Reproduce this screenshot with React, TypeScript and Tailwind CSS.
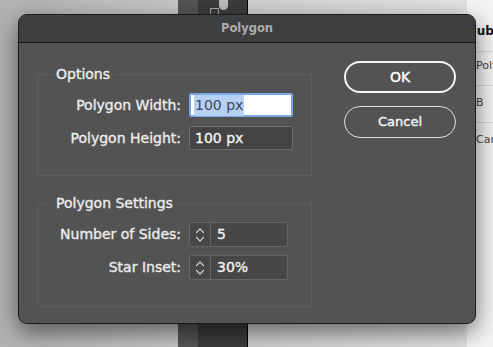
import React from "react";

const font = { fontFamily: '"DejaVu Sans", "Open Sans", sans-serif' };

function Chevrons() {
  return (
    <svg width="10" height="20" viewBox="0 0 10 20" className="block">
      <path d="M1.5 7.5 L5 4 L8.5 7.5" fill="none" stroke="#d0d0d0" strokeWidth="1.2" strokeLinecap="round" strokeLinejoin="round" />
      <path d="M1.5 12.5 L5 16 L8.5 12.5" fill="none" stroke="#d0d0d0" strokeWidth="1.2" strokeLinecap="round" strokeLinejoin="round" />
    </svg>
  );
}

function Row({ label, children }: { label: string; children: React.ReactNode }) {
  return (
    <div className="flex items-center">
      <div className="w-[151px] shrink-0 whitespace-nowrap pr-[8px] text-right text-[14px] text-[#ececec] [-webkit-text-stroke:0.35px_currentColor]">
        {label}
      </div>
      {children}
    </div>
  );
}

function TextField({ value }: { value: string }) {
  return (
    <div className="flex h-[24px] w-[104px] items-center rounded-[2px] border border-[#6c6c6c] bg-[#444444] pl-[5px] text-[14px] text-[#f2f2f2] [-webkit-text-stroke:0.35px_currentColor]">
      {value}
    </div>
  );
}

function SpinField({ value }: { value: string }) {
  return (
    <div className="flex h-[25px] w-[99px] rounded-[2px] border border-[#656565] bg-[#474747]">
      <div className="flex w-[21px] items-center justify-center border-r border-[#656565]">
        <Chevrons />
      </div>
      <div className="flex flex-1 items-center pl-[6px] text-[14px] text-[#f2f2f2] [-webkit-text-stroke:0.35px_currentColor]">
        {value}
      </div>
    </div>
  );
}

export default function App() {
  return (
    <div
      className="relative h-[347px] w-[493px] overflow-hidden bg-gradient-to-r from-[#b2b2b2] via-[#d0d0d0] to-[#e6e6e6]"
      style={font}
    >
      {/* app behind: dark tool column */}
      <div className="absolute left-[178px] top-0 flex h-full w-[70px] border-r border-black">
        <div className="w-[20px] bg-[#555555]" />
        <div className="flex-1 bg-[#3c3c3c]">
          <div className="flex items-end pl-[12px]">
            <div className="h-[7px] w-[9px] border border-[#a8a8a8]" />
            <div className="mb-[5px] h-[10px] w-[9px] rounded-b-full bg-[#bcbcbc]" />
          </div>
        </div>
      </div>

      {/* app behind: right panel */}
      <div className="absolute left-[467px] top-0 h-full w-[40px] whitespace-nowrap bg-[#f4f4f4] text-[11px] text-[#444]">
        <div className="pl-[1px] pt-[22px] text-[12px] font-bold text-[#111]">Subject</div>
        <div className="mt-[11px] border-t border-[#d8d8d8] pl-[9px] pt-[6px]">Polygon</div>
        <div className="mt-[10px] border-t border-[#d8d8d8] pl-[9px] pt-[9px]">B</div>
        <div className="mt-[11px] border-t border-[#d8d8d8] pl-[9px] pt-[9px]">Cancel</div>
      </div>

      {/* dialog */}
      <div className="relative ml-[18px] mt-[14px] flex h-[310px] w-[458px] flex-col overflow-hidden rounded-[9px] border border-[#1c1c1c] bg-[#535353] shadow-[0_8px_24px_rgba(0,0,0,0.55)]">
        <div className="flex h-[28px] shrink-0 items-center justify-center border-b border-[#151515] bg-[#3e3f41] text-[11.5px] font-bold text-[#acacac]">
          Polygon
        </div>

        <div className="flex gap-[32px] pl-[18px] pt-[18px]">
          <div className="flex w-[275px] flex-col gap-[18px] pt-[4px]">
            <fieldset className="border border-[#5d5d5d] pb-[25px] pt-[10px]">
              <legend className="ml-[15px] px-[3px] text-[14px] leading-[18px] text-[#ececec] [-webkit-text-stroke:0.35px_currentColor]">
                Options
              </legend>
              <div className="flex flex-col gap-[9px]">
                <Row label="Polygon Width:">
                  <div className="flex h-[24px] w-[104px] items-center rounded-[2px] border-2 border-[#7ba7e3] bg-white pl-[3px] text-[14px] text-[#3a4658]">
                    <span className="bg-[#b5d0f3] px-[1px]">100 px</span>
                  </div>
                </Row>
                <Row label="Polygon Height:">
                  <TextField value="100 px" />
                </Row>
              </div>
            </fieldset>

            <fieldset className="border border-[#5d5d5d] pb-[26px] pt-[10px]">
              <legend className="ml-[15px] px-[3px] text-[14px] leading-[18px] text-[#ececec] [-webkit-text-stroke:0.35px_currentColor]">
                Polygon Settings
              </legend>
              <div className="flex flex-col gap-[8px]">
                <Row label="Number of Sides:">
                  <SpinField value="5" />
                </Row>
                <Row label="Star Inset:">
                  <SpinField value="30%" />
                </Row>
              </div>
            </fieldset>
          </div>

          <div className="flex w-[112px] flex-col gap-[13px]">
            <button className="h-[32px] w-[112px] rounded-full border-2 border-[#f4f4f4] text-[14px] text-white [-webkit-text-stroke:0.4px_currentColor]">
              OK
            </button>
            <button className="h-[32px] w-[112px] rounded-full border border-[#e0e0e0] text-[13px] text-[#f4f4f4] [-webkit-text-stroke:0.4px_currentColor]">
              Cancel
            </button>
          </div>
        </div>
      </div>
    </div>
  );
}
